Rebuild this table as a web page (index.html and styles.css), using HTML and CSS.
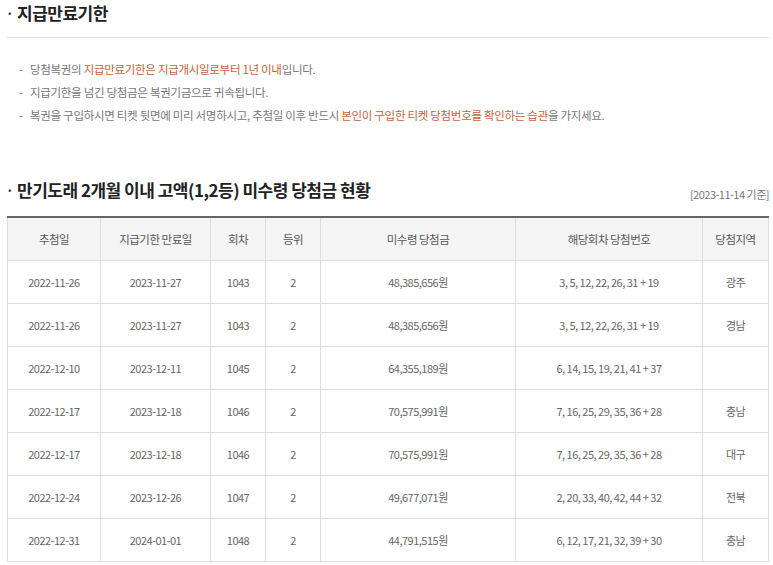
FILE: index.html
```html
<!doctype html>
<html>
<head>
<meta charset="utf-8">
<link rel="stylesheet" href="styles.css">
<title>지급만료기한</title>
</head>
<body>
<div class="wrap">

<h2 class="tit">지급만료기한</h2>
<hr />

<ul class="notice">
<li>당첨복권의 <span class="em">지급만료기한은 지급개시일로부터 1년 이내</span>입니다.</li>
<li>지급기한을 넘긴 당첨금은 복권기금으로 귀속됩니다.</li>
<li>복권을 구입하시면 티켓 뒷면에 미리 서명하시고, 추첨일 이후 반드시 <span class="em">본인이 구입한 티켓 당첨번호를 확인하는 습관</span>을 가지세요.</li>
</ul>

<div class="head">
<h2 class="tit">만기도래 2개월 이내 고액(1,2등) 미수령 당첨금 현황</h2>
<span class="date">[2023-11-14 기준]</span>
</div>

<table class="tbl">
<colgroup>
<col style="width:93px">
<col style="width:110px">
<col style="width:55px">
<col style="width:55px">
<col style="width:195px">
<col style="width:187px">
<col>
</colgroup>
<thead>
<tr>
<th>추첨일</th>
<th>지급기한 만료일</th>
<th>회차</th>
<th>등위</th>
<th>미수령 당첨금</th>
<th>해당회차 당첨번호</th>
<th>당첨지역</th>
</tr>
</thead>
<tbody>
<tr><td>2022-11-26</td><td>2023-11-27</td><td>1043</td><td>2</td><td>48,385,656원</td><td>3, 5, 12, 22, 26, 31 + 19</td><td>광주</td></tr>
<tr><td>2022-11-26</td><td>2023-11-27</td><td>1043</td><td>2</td><td>48,385,656원</td><td>3, 5, 12, 22, 26, 31 + 19</td><td>경남</td></tr>
<tr><td>2022-12-10</td><td>2023-12-11</td><td>1045</td><td>2</td><td>64,355,189원</td><td>6, 14, 15, 19, 21, 41 + 37</td><td></td></tr>
<tr><td>2022-12-17</td><td>2023-12-18</td><td>1046</td><td>2</td><td>70,575,991원</td><td>7, 16, 25, 29, 35, 36 + 28</td><td>충남</td></tr>
<tr><td>2022-12-17</td><td>2023-12-18</td><td>1046</td><td>2</td><td>70,575,991원</td><td>7, 16, 25, 29, 35, 36 + 28</td><td>대구</td></tr>
<tr><td>2022-12-24</td><td>2023-12-26</td><td>1047</td><td>2</td><td>49,677,071원</td><td>2, 20, 33, 40, 42, 44 + 32</td><td>전북</td></tr>
<tr><td>2022-12-31</td><td>2024-01-01</td><td>1048</td><td>2</td><td>44,791,515원</td><td>6, 12, 17, 21, 32, 39 + 30</td><td>충남</td></tr>
</tbody>
</table>

</div>
</body>
</html>
```

FILE: styles.css
```css
h2,
p,
ul {
    margin: 0;
    padding: 0;
}
body {
    font-family: "Noto Sans CJK KR", "Noto Sans", sans-serif;
    font-size: 11px;
    color: #666;
    background-color: white;
    margin: 0;
}
.wrap {
    width: 762px;
    margin-left: 7px;
}
.tit {
    font-size: 17px;
    line-height: 26px;
    color: #222;
    font-weight: bold;
    letter-spacing: -0.5px;
    padding-left: 10px;
    position: relative;
}
.tit:before {
    content: "\00B7";
    position: absolute;
    left: -2px;
    top: 0;
    font-weight: normal;
}
hr {
    margin: 11px 0 0;
    border: 0;
    border-bottom: 1px solid #ddd;
}
.notice {
    list-style: none;
    margin-top: 20px;
    padding-left: 12px;
}
.notice li {
    font-size: 11.5px;
    line-height: 23px;
    letter-spacing: -0.3px;
    color: #777;
    position: relative;
    padding-left: 11px;
}
.notice li:before {
    content: "-";
    position: absolute;
    left: 0;
    top: 0;
}
.em {
    color: #c8623e;
}
.head {
    display: flex;
    justify-content: space-between;
    align-items: flex-end;
    margin-top: 50px;
}
.date {
    font-size: 11px;
    color: #777;
    letter-spacing: -0.5px;
    padding-bottom: 1px;
}
.tbl {
    width: 762px;
    margin-top: 13px;
    border-collapse: collapse;
    table-layout: fixed;
    border-top: 2px solid #666;
}
.tbl th,
.tbl td {
    border: 1px solid #ddd;
    height: 42px;
    padding: 0;
    text-align: center;
    font-weight: normal;
    letter-spacing: -0.5px;
}
.tbl th {
    background-color: #f5f5f5;
    color: #555;
    font-size: 11.5px;
}
.tbl td {
    color: #666;
}
```
